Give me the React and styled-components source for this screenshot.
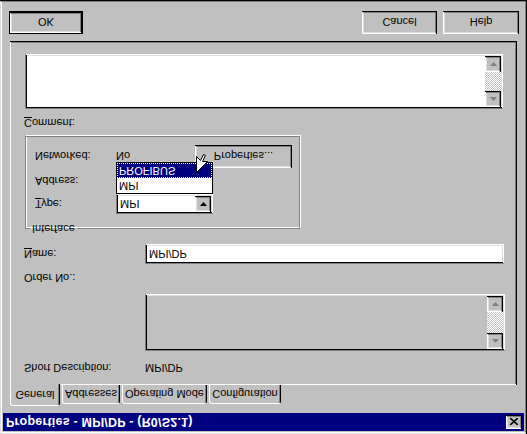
import React from 'react';
import styled, { createGlobalStyle, css } from 'styled-components';

const GlobalStyle = createGlobalStyle`
  html, body {
    margin: 0;
    padding: 0;
    background: #c0c0c0;
  }
  body {
    width: 527px;
    height: 434px;
    overflow: hidden;
    font-family: "Liberation Sans", Arial, sans-serif;
    font-size: 11px;
    color: #000;
  }
`;

const raised = css`
  box-shadow: inset -1px -1px #000, inset 1px 1px #fff, inset -2px -2px #808080, inset 2px 2px #dfdfdf;
`;

const sunken = css`
  box-shadow: inset 1px 1px #808080, inset -1px -1px #fff, inset 2px 2px #000, inset -2px -2px #dfdfdf;
`;

// the reference capture is mirrored top to bottom, so the whole window is flipped
const Window = styled.div`
  width: 527px;
  height: 434px;
  box-sizing: border-box;
  padding: 3px;
  background: #c0c0c0;
  box-shadow: inset -1px -1px #000, inset 1px 1px #dfdfdf, inset -2px -2px #808080, inset 2px 2px #fff;
  display: flex;
  flex-direction: column;
  transform: scaleY(-1);
`;

const TitleBar = styled.div`
  height: 18px;
  background: #000080;
  color: #fff;
  display: flex;
  align-items: center;
  justify-content: space-between;
  padding: 0 2px 0 3px;
  font-weight: bold;
  font-size: 12.5px;
  letter-spacing: 0.2px;
`;

const CloseButton = styled.div`
  width: 16px;
  height: 14px;
  background: #c0c0c0;
  ${raised};
  display: flex;
  align-items: center;
  justify-content: center;
`;

const Body = styled.div`
  padding: 7px 7px 0 7px;
  display: flex;
  flex-direction: column;
`;

const TabRow = styled.div`
  display: flex;
  align-items: flex-end;
  height: 21px;
  gap: 2px;
`;

const Tab = styled.div`
  box-sizing: border-box;
  width: ${p => p.$w}px;
  height: ${p => (p.$active ? 22 : 19)}px;
  margin-bottom: ${p => (p.$active ? -1 : 0)}px;
  position: relative;
  z-index: ${p => (p.$active ? 2 : 0)};
  background: #c0c0c0;
  border-top: 1px solid #fff;
  border-left: 1px solid #fff;
  border-right: 1px solid #000;
  border-radius: 3px 3px 0 0;
  box-shadow: inset -1px 0 #808080;
  display: flex;
  align-items: center;
  justify-content: center;
  padding-bottom: ${p => (p.$active ? 2 : 0)}px;
`;

const Panel = styled.div`
  box-sizing: border-box;
  height: 344px;
  padding: 10px 12px 0 14px;
  background: #c0c0c0;
  box-shadow: inset -1px -1px #000, inset 1px 1px #fff, inset -2px -2px #808080;
  display: flex;
  flex-direction: column;
`;

const FieldRow = styled.div`
  display: grid;
  grid-template-columns: ${p => p.$cols || '121px 1fr'};
  align-items: center;
  height: ${p => p.$h || 14}px;
  margin-top: ${p => p.$mt || 0}px;
  margin-right: ${p => p.$mr || 0}px;
`;

const Label = styled.span`
  white-space: nowrap;
  line-height: 14px;
`;

const Key = styled.span`
  text-decoration: underline;
`;

const TextBox = styled.div`
  box-sizing: border-box;
  height: ${p => p.$h}px;
  margin: ${p => p.$m};
  background: ${p => (p.$disabled ? '#c0c0c0' : '#fff')};
  ${sunken};
  display: flex;
  padding: 2px;
`;

const TextArea = styled.div`
  flex: 1;
`;

const InputBox = styled.div`
  box-sizing: border-box;
  height: 20px;
  background: #fff;
  ${sunken};
  display: flex;
  align-items: center;
  padding: 0 4px;
`;

const ScrollBar = styled.div`
  width: 16px;
  display: flex;
  flex-direction: column;
`;

const ScrollButton = styled.div`
  width: 16px;
  height: 16px;
  box-sizing: border-box;
  background: #c0c0c0;
  ${raised};
  display: flex;
  align-items: center;
  justify-content: center;
`;

const ScrollTrack = styled.div`
  flex: 1;
  background-color: #c0c0c0;
  background-image: repeating-conic-gradient(#fff 0 25%, #c0c0c0 0 50%);
  background-size: 2px 2px;
`;

const Group = styled.fieldset`
  box-sizing: border-box;
  width: 275px;
  min-width: 0;
  margin: 8px 0 0 1px;
  padding: 8px 8px 8px 9px;
  border: 1px solid #808080;
  box-shadow: inset 1px 1px #fff, 1px 1px #fff;
  display: flex;
  flex-direction: column;
  gap: 3px;
`;

const Legend = styled.legend`
  padding: 0 2px;
  margin-left: -5px;
  line-height: 14px;
`;

const Combo = styled.div`
  position: relative;
  box-sizing: border-box;
  width: 97px;
  height: 20px;
  background: #fff;
  ${sunken};
  display: flex;
  align-items: center;
  padding: 2px 2px 2px 4px;
`;

const ComboText = styled.span`
  flex: 1;
`;

const DropList = styled.div`
  position: absolute;
  left: 0;
  top: 20px;
  z-index: 3;
  box-sizing: border-box;
  width: 97px;
  border: 1px solid #000;
  background: #fff;
  display: flex;
  flex-direction: column;
`;

const DropItem = styled.div`
  height: 15px;
  line-height: 15px;
  padding-left: 2px;
  background: ${p => (p.$selected ? '#000080' : '#fff')};
  color: ${p => (p.$selected ? '#fff' : '#000')};
  outline: ${p => (p.$selected ? '1px dotted #ffff80' : 'none')};
  outline-offset: -1px;
`;

const ButtonSlot = styled.div`
  position: relative;
`;

const Button = styled.div`
  box-sizing: border-box;
  width: ${p => p.$w}px;
  height: 23px;
  background: #c0c0c0;
  ${raised};
  display: flex;
  align-items: center;
  justify-content: center;
  ${p =>
    p.$default &&
    css`
      border: 1px solid #000;
    `}
`;

const Cursor = styled.svg`
  position: absolute;
  left: 1px;
  top: -5px;
  z-index: 4;
`;

const ButtonRow = styled.div`
  display: flex;
  margin: 7px -2px 0 -1px;
  gap: 6px;
`;

const Spacer = styled.div`
  flex: 1;
`;

const Arrow = ({ up }) => (
  <svg width="7" height="4" viewBox="0 0 7 4">
    <path d={up ? 'M3.5 0 L7 4 L0 4 Z' : 'M0 0 L7 0 L3.5 4 Z'} fill="#808080" />
  </svg>
);

const Scroller = () => (
  <ScrollBar>
    <ScrollButton><Arrow up /></ScrollButton>
    <ScrollTrack />
    <ScrollButton><Arrow /></ScrollButton>
  </ScrollBar>
);

export default function App() {
  return (
    <>
      <GlobalStyle />
      <Window>
        <TitleBar>
          <span>Properties - MPI/DP - (R0/S2.1)</span>
          <CloseButton>
            <svg width="8" height="7" viewBox="0 0 8 7">
              <path d="M0 0 L8 7 M8 0 L0 7" stroke="#000" strokeWidth="1.6" />
            </svg>
          </CloseButton>
        </TitleBar>
        <Body>
          <TabRow>
            <Tab $w={50} $active>General</Tab>
            <Tab $w={58}>Addresses</Tab>
            <Tab $w={85}>Operating Mode</Tab>
            <Tab $w={72}>Configuration</Tab>
          </TabRow>
          <Panel>
            <FieldRow>
              <Label>Short Description:</Label>
              <Label>MPI/DP</Label>
            </FieldRow>
            <TextBox $h={57} $m="10px 0 0 121px" $disabled>
              <TextArea />
              <Scroller />
            </TextBox>
            <FieldRow $mt={9}>
              <Label>Order No.:</Label>
            </FieldRow>
            <FieldRow $mt={7} $h={20} $mr={1}>
              <Label><Key>N</Key>ame:</Label>
              <InputBox>MPI/DP</InputBox>
            </FieldRow>
            <Group>
              <Legend>Interface</Legend>
              <FieldRow $cols="81px 1fr" $h={20}>
                <Label><Key>T</Key>ype:</Label>
                <Combo>
                  <ComboText>MPI</ComboText>
                  <ScrollButton>
                    <svg width="7" height="4" viewBox="0 0 7 4">
                      <path d="M0 0 L7 0 L3.5 4 Z" fill="#000" />
                    </svg>
                  </ScrollButton>
                  <DropList>
                    <DropItem>MPI</DropItem>
                    <DropItem $selected>PROFIBUS</DropItem>
                  </DropList>
                </Combo>
              </FieldRow>
              <FieldRow $cols="81px 1fr" $h={20}>
                <Label>Address:</Label>
              </FieldRow>
              <FieldRow $cols="81px 79px 97px" $h={23}>
                <Label>Networked:</Label>
                <Label>No</Label>
                <ButtonSlot>
                  <Button $w={97}>Properties...</Button>
                  <Cursor width="12" height="20" viewBox="0 0 12 20">
                    <path
                      d="M0.5 0.5 L0.5 16.5 L4.5 12.5 L7.5 18.5 L9.5 17.5 L6.5 11.5 L11.5 11.5 Z"
                      fill="#fff"
                      stroke="#000"
                      strokeWidth="1"
                    />
                  </Cursor>
                </ButtonSlot>
              </FieldRow>
            </Group>
            <FieldRow $mt={6}>
              <Label><Key>C</Key>omment:</Label>
            </FieldRow>
            <TextBox $h={55} $m="7px 2px 0 1px">
              <TextArea />
              <Scroller />
            </TextBox>
          </Panel>
          <ButtonRow>
            <Button $w={74} $default>OK</Button>
            <Spacer />
            <Button $w={75}>Cancel</Button>
            <Button $w={76}>Help</Button>
          </ButtonRow>
        </Body>
      </Window>
    </>
  );
}
